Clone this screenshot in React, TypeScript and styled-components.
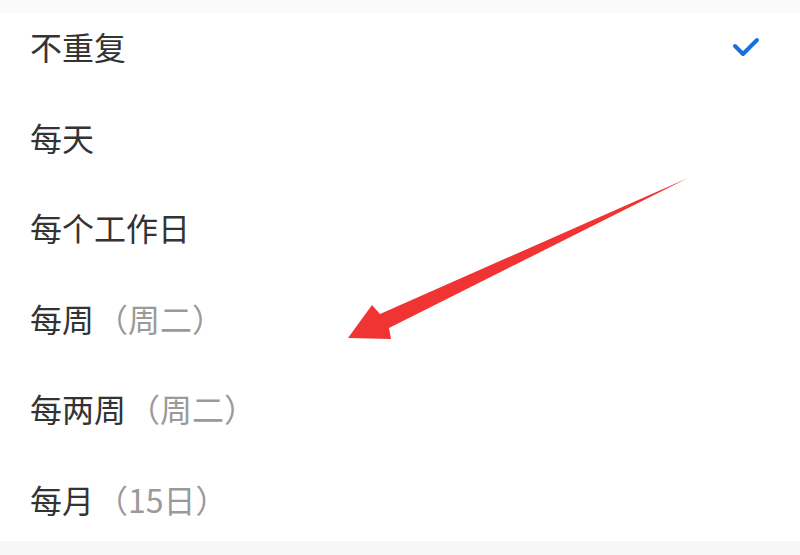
import React from "react";
import styled, { createGlobalStyle } from "styled-components";

const GlobalStyle = createGlobalStyle`
    html, body {
        margin: 0;
        padding: 0;
        background: #ffffff;
    }
    body {
        font-family: "Noto Sans CJK SC", "Noto Sans", sans-serif;
    }
`

const Page = styled.div`
    position: relative;
    width: 800px;
    height: 555px;
    overflow: hidden;
    display: flex;
    flex-direction: column;
    background: #ffffff;
`

const TopStrip = styled.div`
    height: 13px;
    background: #fafafa;
`

const List = styled.ul`
    list-style: none;
    margin: 0;
    padding: 0;
`

const Row = styled.li`
    height: 90.5px;
    box-sizing: border-box;
    padding: 17px 40px 0 30px;
    display: flex;
    align-items: flex-start;
    justify-content: space-between;
    &:last-child {
        height: 75.5px;
    }
`

const Label = styled.span`
    font-size: 32px;
    line-height: 32px;
    color: #333333;
`

const Hint = styled.span`
    color: #9a9a9a;
    margin-left: 2px;
`

const Check = styled.svg`
    width: 30px;
    height: 24px;
    margin-top: 6px;
`

const BottomBar = styled.div`
    flex: 1;
    background: #f7f7f7;
`

const Annotation = styled.svg`
    position: absolute;
    left: 0;
    top: 0;
    width: 800px;
    height: 555px;
    pointer-events: none;
`

const options = [
    { main: "不重复", hint: "", checked: true },
    { main: "每天", hint: "" },
    { main: "每个工作日", hint: "" },
    { main: "每周", hint: "（周二）" },
    { main: "每两周", hint: "（周二）" },
    { main: "每月", hint: "（15日）" },
];

export default function App() {
    return (
        <>
            <GlobalStyle />
            <Page>
                <TopStrip />
                <List>
                    {options.map((o) => (
                        <Row key={o.main}>
                            <Label>
                                {o.main}
                                {o.hint && <Hint>{o.hint}</Hint>}
                            </Label>
                            {o.checked && (
                                <Check viewBox="0 0 30 24">
                                    <path d="M5 10 L13 18 L27 4" fill="none" stroke="#1a6fe0" strokeWidth="4" strokeLinecap="round" strokeLinejoin="round" />
                                </Check>
                            )}
                        </Row>
                    ))}
                </List>
                <BottomBar />
                <Annotation viewBox="0 0 800 555">
                    <polygon points="348,338 372,305 380,314 688,178 389,328 391,339" fill="#f03434" />
                </Annotation>
            </Page>
        </>
    );
}
